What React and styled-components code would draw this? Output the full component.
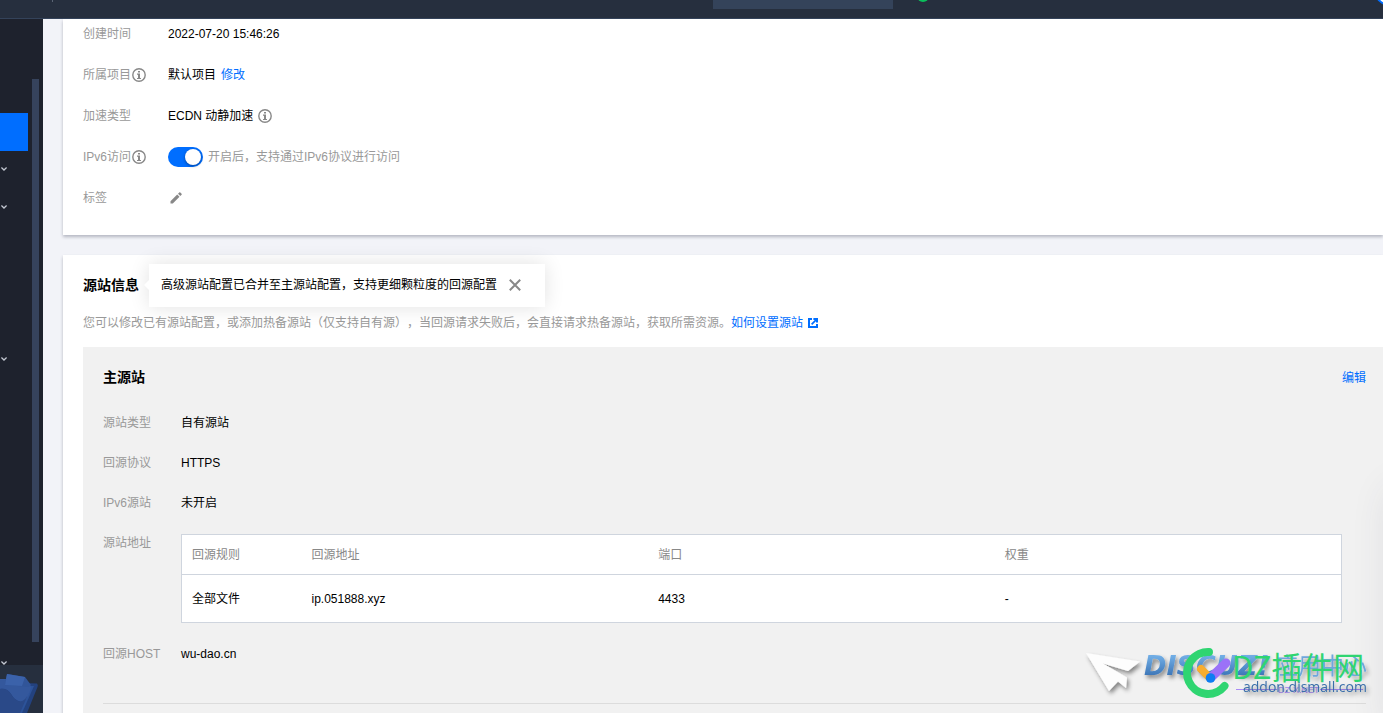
import React, { useState } from "react";
import styled, { createGlobalStyle } from "styled-components";

const navItems = [
  { id: 1, active: true },
  { id: 2, expandable: true },
  { id: 3, expandable: true },
  { id: 4 },
  { id: 5 },
  { id: 6 },
  { id: 7, expandable: true },
  { id: 8 },
  { id: 9 },
  { id: 10 },
  { id: 11 },
  { id: 12 },
  { id: 13 },
  { id: 14 },
  { id: 15, expandable: true },
];

const origins = [
  { rule: "全部文件", address: "ip.051888.xyz", port: "4433", weight: "-" },
];

// \uff0c \uff08 \uff09 are the full-width comma and brackets
const ipv6Hint = "开启后\uff0c支持通过IPv6协议进行访问";
const tipText =
  "高级源站配置已合并至主源站配置\uff0c支持更细颗粒度的回源配置";
const descriptionText =
  "您可以修改已有源站配置\uff0c或添加热备源站\uff08仅支持自有源\uff09\uff0c当回源请求失败后\uff0c会直接请求热备源站\uff0c获取所需资源。";

const InfoIcon = () => (
  <svg width="14" height="14" viewBox="0 0 14 14" fill="none">
    <circle cx="7" cy="7" r="6.2" stroke="#888" strokeWidth="1.4" />
    <path d="M6 3h2v1.600H6zM5 5.600h3v4.300h1V11H5V9.900h1V6.700H5z" fill="#888" />
  </svg>
);

const PencilIcon = () => (
  <svg width="12" height="12" viewBox="0 0 12 12" fill="#888">
    <path d="M0.5 9.2 7.2 2.5 9.5 4.8 2.8 11.5H.5zM8 1.7 9.3.4c.3-.3.7-.3 1 0l1.3 1.3c.3.3.3.7 0 1L10.3 4z" />
  </svg>
);

const CloseIcon = () => (
  <svg width="12" height="12" viewBox="0 0 12 12">
    <path d="M.8.8 11.2 11.2M11.2.8.8 11.2" stroke="#888" strokeWidth="2" />
  </svg>
);

const ExternalIcon = () => (
  <svg width="10" height="10" viewBox="0 0 10 10" fill="none" stroke="#006eff">
    <path d="M4 1H1v8h8V6" strokeWidth="2" />
    <path d="M3.6 6.400 8.600 1.400" strokeWidth="1.700" />
    <path d="M5.400 1H9v3.600" strokeWidth="2" />
  </svg>
);

const ChevronIcon = () => (
  <svg width="6" height="4" viewBox="0 0 6 4" fill="none">
    <path d="M.4.5 3 3 5.6.5" stroke="#c3c8d2" strokeWidth="1.3" />
  </svg>
);

const FolderArt = () => (
  <svg width="43" height="48" viewBox="0 0 43 48">
    <path d="M0 17 37 18.500Q38.500 20 37.500 22L27 48H0z" fill="#23427f" />
    <path d="M28 21 34 21 22 48H14z" fill="#2d5399" />
    <path d="M0 14h26l5 8Q28 37 20 36.500 15 36 11 29 7 23 0 24z" fill="#34589d" />
    <path d="M0 24Q7 23 11 29 15 36 20 36.500 26 36 29 27L20 48H0z" fill="#2a4988" />
    <path d="M7 9 25 12 31 20 29 22 5 20z" fill="#315599" />
    <path d="M7 9 25 12 22 21 5 20z" fill="#3b62aa" />
  </svg>
);

const Watermark = () => (
  <WatermarkArt viewBox="0 0 303 73" width="303" height="73">
    <defs>
      <linearGradient id="brandBlue" x1="0" y1="0" x2="0" y2="1">
        <stop offset="0.2" stopColor="#70ade5" />
        <stop offset="0.8" stopColor="#3f78b9" />
      </linearGradient>
      <filter id="drop" x="-20%" y="-20%" width="150%" height="160%">
        <feDropShadow dx="2" dy="3" stdDeviation="2" floodOpacity="0.45" />
      </filter>
    </defs>
    <g filter="url(#drop)">
      <path d="M6 13 60 21.500 48 31 23 23.500 47 37.500 46 48 38 41.500 29 51z" fill="#fdfdfd" />
      <text className="brand" x="64" y="35" fill="url(#brandBlue)">
        DISCUZ!
      </text>
      <text className="center" x="195" y="34" fill="#6fa6dc">
        应用中心
      </text>
    </g>
    <g fill="none" strokeLinecap="round">
      <path d="M129 12A21 21 0 1 0 144.500 46" stroke="#2fd571" strokeWidth="8" />
      <path d="M121 29 130 38" stroke="#f7ad2f" strokeWidth="8" />
      <path d="M146 23 131 37.500" stroke="#9b72f8" strokeWidth="9" />
    </g>
    <circle cx="130.500" cy="38" r="4.800" fill="#0d7df2" />
    <path d="M156 49.500H197M240 49.500H283" stroke="#a98bf5" />
    <text className="net" x="198" y="53" fill="#a98bf5">
      DZ-X.NET
    </text>
    <text className="title" x="152" y="39" fill="#2fd571">
      DZ插件网
    </text>
    <text className="domain" x="163" y="52" fill="#3a6ea8" filter="url(#drop)">
      addon.dismall.com
    </text>
  </WatermarkArt>
);

const App = () => {
  const [ipv6, setIpv6] = useState(true);
  const [showTip, setShowTip] = useState(true);

  return (
    <>
      <GlobalStyle />
      <Page>
        <Header>
          <HeaderDivider />
          <HeaderTools>
            <Search type="text" aria-label="搜索" />
            <StatusDot />
          </HeaderTools>
          <Avatar />
        </Header>
        <Body>
          <Sidebar>
            <NavArea>
              <NavList>
                {navItems.map(({ id, active, expandable }) => (
                  <NavItem key={id} $active={active}>
                    {expandable && (
                      <button type="button" aria-label="展开">
                        <ChevronIcon />
                      </button>
                    )}
                  </NavItem>
                ))}
              </NavList>
              <ScrollThumb />
            </NavArea>
            <SidebarFooter>
              <FolderArt />
            </SidebarFooter>
          </Sidebar>

          <Main>
            <BasicCard>
              <InfoRow>
                <dt>创建时间</dt>
                <dd>2022-07-20 15:46:26</dd>
              </InfoRow>
              <InfoRow>
                <dt>
                  所属项目
                  <InfoIcon />
                </dt>
                <dd>
                  默认项目
                  <TextLink href="#project">修改</TextLink>
                </dd>
              </InfoRow>
              <InfoRow>
                <dt>加速类型</dt>
                <dd>
                  ECDN 动静加速
                  <InfoIcon />
                </dd>
              </InfoRow>
              <InfoRow>
                <dt>
                  IPv6访问
                  <InfoIcon />
                </dt>
                <dd>
                  <SwitchLabel>
                    <Switch
                      type="checkbox"
                      checked={ipv6}
                      onChange={(e) => setIpv6(e.target.checked)}
                    />
                    {ipv6Hint}
                  </SwitchLabel>
                </dd>
              </InfoRow>
              <InfoRow>
                <dt>标签</dt>
                <dd>
                  <EditButton type="button" aria-label="编辑标签">
                    <PencilIcon />
                  </EditButton>
                </dd>
              </InfoRow>
            </BasicCard>

            <OriginCard>
              <TitleRow>
                <h3>源站信息</h3>
                {showTip && (
                  <Tip>
                    {tipText}
                    <button
                      type="button"
                      aria-label="关闭"
                      onClick={() => setShowTip(false)}
                    >
                      <CloseIcon />
                    </button>
                  </Tip>
                )}
              </TitleRow>
              <Description>
                {descriptionText}
                <a href="#origin-guide">
                  如何设置源站
                  <ExternalIcon />
                </a>
              </Description>

              <Panel>
                <PanelHeader>
                  <h4>主源站</h4>
                  <TextLink href="#edit">编辑</TextLink>
                </PanelHeader>
                <PanelRows>
                  <PanelRow>
                    <dt>源站类型</dt>
                    <dd>自有源站</dd>
                  </PanelRow>
                  <PanelRow>
                    <dt>回源协议</dt>
                    <dd>HTTPS</dd>
                  </PanelRow>
                  <PanelRow>
                    <dt>IPv6源站</dt>
                    <dd>未开启</dd>
                  </PanelRow>
                  <PanelRow>
                    <dt>源站地址</dt>
                    <dd>
                      <OriginTable>
                        <thead>
                          <tr>
                            <th>回源规则</th>
                            <th>回源地址</th>
                            <th>端口</th>
                            <th>权重</th>
                          </tr>
                        </thead>
                        <tbody>
                          {origins.map(({ rule, address, port, weight }) => (
                            <tr key={address}>
                              <td>{rule}</td>
                              <td>{address}</td>
                              <td>{port}</td>
                              <td>{weight}</td>
                            </tr>
                          ))}
                        </tbody>
                      </OriginTable>
                    </dd>
                  </PanelRow>
                  <PanelRow>
                    <dt>回源HOST</dt>
                    <dd>wu-dao.cn</dd>
                  </PanelRow>
                </PanelRows>
              </Panel>
            </OriginCard>
          </Main>
        </Body>
        <SideDock />
        <Watermark />
      </Page>
    </>
  );
};

const GlobalStyle = createGlobalStyle`
  * {
    box-sizing: border-box;
  }
  body {
    margin: 0;
    color: #000;
    font-family: "Liberation Sans", "Noto Sans CJK SC", sans-serif;
    font-size: 12px;
    line-height: 20px;
    text-spacing-trim: space-all;
  }
  h3, h4, dl, dd, p, ul {
    margin: 0;
    padding: 0;
  }
  h3, h4 {
    font-size: 14px;
    font-weight: 700;
  }
  a {
    color: #006eff;
    text-decoration: none;
  }
  button {
    display: flex;
    padding: 0;
    border: none;
    background: transparent;
    cursor: pointer;
  }
  svg {
    flex: none;
  }
`;

const Page = styled.div`
  position: relative;
  display: flex;
  flex-direction: column;
  height: 100vh;
  overflow: hidden;
  background: #f2f3f8;
`;

const Header = styled.header`
  display: flex;
  align-items: flex-end;
  flex: none;
  height: 19px;
  overflow: hidden;
  background: #262f3e;
  border-bottom: 1px solid #34435a;
`;

const HeaderDivider = styled.span`
  width: 1px;
  height: 24px;
  margin: 0 auto 16px 52px;
  background: #5b6575;
`;

const HeaderTools = styled.div`
  display: flex;
  align-items: flex-end;
  gap: 24px;
`;

const Search = styled.input`
  width: 180px;
  height: 30px;
  margin-bottom: 9px;
  border: none;
  background: #34435a;
`;

const StatusDot = styled.span`
  width: 12px;
  height: 12px;
  margin-bottom: 16px;
  border-radius: 50%;
  background: #0abf5b;
`;

const Avatar = styled.span`
  flex: none;
  width: 32px;
  height: 32px;
  margin: 0 -23px 12px 445px;
  border: 2px solid #006eff;
  border-radius: 50%;
  background: #fff;
`;

const Body = styled.div`
  display: flex;
  flex: 1;
  min-height: 0;
`;

const Sidebar = styled.aside`
  display: flex;
  flex-direction: column;
  flex: none;
  width: 43px;
  background: #1e222d;
`;

const NavArea = styled.nav`
  display: flex;
  flex: 1;
  gap: 4px;
  min-height: 0;
  overflow: hidden;
`;

const NavList = styled.ul`
  width: 28px;
  padding-top: 94px;
  list-style: none;
`;

const NavItem = styled.li`
  display: flex;
  align-items: center;
  height: 38px;
  padding: 0 1px 2px;
  background: ${({ $active }) => ($active ? "#006eff" : "transparent")};
`;

const ScrollThumb = styled.div`
  width: 7px;
  margin: 60px 0 23px;
  background: #36435c;
`;

const SidebarFooter = styled.div`
  display: flex;
  height: 48px;
  background: #262f3e;
`;

const Main = styled.main`
  flex: 1;
  min-width: 0;
  padding-left: 20px;
  overflow: hidden;
`;

const Card = styled.section`
  background: #fff;
  box-shadow: 0 2px 3px rgba(54, 58, 80, 0.32);
`;

const BasicCard = styled(Card).attrs({ as: "dl" })`
  && {
    display: flex;
    flex-direction: column;
    gap: 21px;
    margin-bottom: 20px;
    padding: 5px 20px 27px;
  }
`;

const OriginCard = styled(Card)`
  padding: 9px 0 20px 20px;
`;

const InfoRow = styled.div`
  display: flex;
  height: 20px;
  dt {
    display: flex;
    align-items: center;
    gap: 1px;
    width: 85px;
    color: #999;
  }
  dd {
    display: flex;
    align-items: center;
    gap: 5px;
  }
`;

const TextLink = styled.a`
  color: #006eff;
`;

const SwitchLabel = styled.label`
  display: flex;
  align-items: center;
  gap: 5px;
  color: #999;
`;

const Switch = styled.input`
  appearance: none;
  display: flex;
  align-items: center;
  width: 35px;
  height: 20px;
  margin: 0;
  padding: 0 2px;
  border-radius: 10px;
  background: #ccc;
  &:checked {
    justify-content: flex-end;
    background: #006eff;
  }
  &::after {
    content: "";
    width: 16px;
    height: 16px;
    border-radius: 50%;
    background: #fff;
    box-shadow: 0 1px 3px rgba(0, 0, 0, 0.4);
  }
`;

const EditButton = styled.button`
  margin-left: 2px;
`;

const TitleRow = styled.div`
  display: flex;
  align-items: center;
  gap: 10px;
  height: 43px;
  h3 {
    padding-bottom: 2px;
  }
`;

const Tip = styled.div`
  position: relative;
  display: flex;
  align-items: center;
  gap: 12px;
  height: 43px;
  padding: 0 24px 2px 12px;
  background: #fff;
  box-shadow: 0 0 20px rgba(0, 0, 0, 0.12);
  &::before {
    content: "";
    position: absolute;
    left: -5px;
    top: 16px;
    border: 5px solid transparent;
    border-left: none;
    border-right-color: #fff;
  }
`;

const Description = styled.p`
  && {
    display: flex;
    margin: 6px 0 14px;
    color: #999;
  }
  a {
    display: flex;
    align-items: center;
    gap: 5px;
  }
`;

const Panel = styled.div`
  padding: 20px 17px 20px 20px;
  background: #f1f1f1;
`;

const PanelHeader = styled.div`
  display: flex;
  align-items: baseline;
  justify-content: space-between;
  height: 20px;
  margin-bottom: 26px;
`;

const PanelRows = styled.dl`
  && {
    display: flex;
    flex-direction: column;
    gap: 20px;
    padding-bottom: 39px;
    border-bottom: 1px solid #dcdcdc;
  }
`;

const PanelRow = styled.div`
  display: flex;
  dt {
    flex: none;
    width: 78px;
    color: #999;
  }
  dd {
    flex: 1;
    padding-right: 24px;
  }
`;

const OriginTable = styled.table`
  width: 100%;
  margin: 1px 0;
  table-layout: fixed;
  border-collapse: collapse;
  background: #fff;
  border: 1px solid #cfd5de;
  th,
  td {
    padding: 0 10px;
    text-align: left;
    font-weight: 400;
  }
  th {
    height: 40px;
    color: #888;
    border-bottom: 1px solid #cfd5de;
    &:first-child {
      width: 120px;
    }
  }
  td {
    height: 48px;
  }
`;

/* floating toolbar parked past the right edge, only its glow shows */
const SideDock = styled.div`
  position: absolute;
  right: -52px;
  top: 490px;
  width: 44px;
  height: 240px;
  background: #fff;
  box-shadow: 0 0 40px rgba(54, 58, 80, 0.12);
`;

const WatermarkArt = styled.svg`
  position: absolute;
  right: 0;
  bottom: 0;
  pointer-events: none;
  .brand {
    font: italic 700 27px "DejaVu Sans", sans-serif;
  }
  .center {
    font: 23px "Noto Sans CJK SC", sans-serif;
  }
  .net {
    font: 9px "Liberation Sans", sans-serif;
  }
  .title {
    font: 31px "Noto Sans CJK SC", sans-serif;
  }
  .domain {
    font: 14px "Open Sans", sans-serif;
  }
`;

export default App;
